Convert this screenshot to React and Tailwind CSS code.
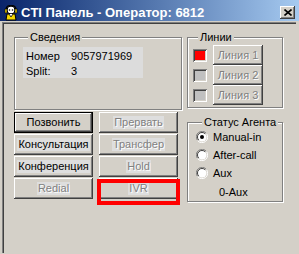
import React from 'react';

const raised = "shadow-[inset_-1px_-1px_#404040,inset_1px_1px_#ffffff,inset_-2px_-2px_#808080,inset_2px_2px_#d4d0c8]";
const sunken = "shadow-[inset_1px_1px_#808080,inset_-1px_-1px_#ffffff,inset_2px_2px_#404040,inset_-2px_-2px_#d4d0c8]";
const etched = "border border-[#808080] shadow-[inset_1px_1px_0_#ffffff,1px_1px_0_#ffffff]";
const disabledText = "text-[#808080] [text-shadow:1px_1px_0_#ffffff]";

const AgentIcon = () => (
    <svg width="16" height="16" viewBox="0 0 16 16">
        <circle cx="8" cy="5" r="4" fill="#ffffff" stroke="#000" strokeWidth="1" />
        <path d="M3 5 Q3 0 8 0.8 Q13 0 13 5" fill="none" stroke="#000" strokeWidth="1.2" />
        <rect x="2" y="4" width="2" height="4" fill="#f5d800" stroke="#000" strokeWidth="0.6" />
        <rect x="12" y="4" width="2" height="4" fill="#f5d800" stroke="#000" strokeWidth="0.6" />
        <path d="M4 9 L12 9 L13 15 L3 15 Z" fill="#f5d800" stroke="#000" strokeWidth="1" />
        <path d="M6 9 L8 12 L10 9" fill="#ffffff" stroke="#000" strokeWidth="0.8" />
        <circle cx="6.5" cy="5" r="0.8" fill="#000" />
        <circle cx="9.5" cy="5" r="0.8" fill="#000" />
    </svg>
);

const Radio = ({ checked }) => (
    <svg width="12" height="12" viewBox="0 0 12 12">
        <path d="M10.5 2.5 A5.5 5.5 0 0 0 1.5 9.5" fill="none" stroke="#808080" strokeWidth="1" />
        <path d="M1.5 9.5 A5.5 5.5 0 0 0 10.5 2.5" fill="none" stroke="#ffffff" strokeWidth="1" />
        <circle cx="6" cy="6" r="4.5" fill="#ffffff" />
        <path d="M9.2 2.8 A4.5 4.5 0 0 0 2.8 9.2" fill="none" stroke="#404040" strokeWidth="1" />
        {checked && <circle cx="6" cy="6" r="2" fill="#000" />}
    </svg>
);

const Btn = ({ label, disabled, isDefault, shade }) => (
    <div className={`h-[21px] flex items-center justify-center bg-[#d4d0c8] ${raised} ${isDefault ? "border border-black" : ""}`}>
        <span className={`leading-[13px] px-[1px] ${shade ? "bg-[#dedede]" : ""} ${disabled ? disabledText : "text-black"}`}>{label}</span>
    </div>
);

const LineRow = ({ n, active }) => (
    <div className="flex items-center h-[20px]">
        <div className={`w-[14px] h-[13px] p-[2px] ${sunken}`}>
            <div className={`w-full h-full ${active ? "bg-[#ff0000]" : "bg-[#c0c0c0]"}`} />
        </div>
        <div className={`ml-[6px] w-[50px] h-[20px] flex items-center justify-center ${raised}`}>
            <span className={`leading-[13px] ${disabledText}`}>Линия {n}</span>
        </div>
    </div>
);

const App = () => {
    return (
        <div className="w-[299px] h-[254px] bg-[#d4d0c8] overflow-hidden text-[11px] text-black font-['Liberation_Sans',Arial,sans-serif]">
            {/* caption */}
            <div className="h-[21px] pt-[4px] pl-[3px] pr-[4px] flex items-center bg-gradient-to-r from-[#0a246a] to-[#a6caf0]">
                <AgentIcon />
                <span className="ml-[2px] text-white font-bold text-[13px] leading-[16px]">CTI Панель - Оператор: 6812</span>
                <div className={`ml-auto w-[15px] h-[13px] flex items-center justify-center bg-[#d4d0c8] ${raised}`}>
                    <svg width="8" height="7" viewBox="0 0 8 7">
                        <path d="M0.5 0.5 L7.5 6.5 M7.5 0.5 L0.5 6.5" stroke="#000" strokeWidth="1.6" />
                    </svg>
                </div>
            </div>

            {/* window body */}
            <div className="mt-[1px] ml-[2px] w-[294px] h-[231px] border-l border-t border-[#808080] border-r-white border-b-white">
                <div className="h-full border-l border-t border-[#404040] border-r-[#d4d0c8] border-b-[#d4d0c8] flex pt-[7px] pl-[10px]">
                    {/* left column */}
                    <div className="w-[168px] flex flex-col">
                        <fieldset className={`h-[79px] ${etched} pl-[8px]`}>
                            <legend className="ml-[5px] px-[2px] leading-[12px] bg-[#d4d0c8]">Сведения</legend>
                            <div className="mt-[4px] w-[120px] h-[31px] bg-[#dcdcdc] pl-[3px] pt-[2px]">
                                <div className="flex h-[15px] items-center">
                                    <span className="w-[45px]">Номер</span>
                                    <span>9057971969</span>
                                </div>
                                <div className="flex h-[15px] items-center">
                                    <span className="w-[45px]">Split:</span>
                                    <span>3</span>
                                </div>
                            </div>
                        </fieldset>

                        <div className="mt-[2px] grid grid-cols-[79px_79px] gap-x-[6px] gap-y-[1px]">
                            <Btn label="Позвонить" isDefault />
                            <Btn label="Прервать" disabled shade />
                            <Btn label="Консультация" shade />
                            <Btn label="Трансфер" disabled shade />
                            <Btn label="Конференция" shade />
                            <Btn label="Hold" disabled shade />
                            <Btn label="Redial" disabled shade />
                            <div className="relative">
                                <Btn label="IVR" disabled shade />
                                <div className="absolute left-[-2px] top-[1px] w-[83px] h-[26px] border-4 border-[#ff0000]" />
                            </div>
                        </div>
                    </div>

                    {/* right column */}
                    <div className="ml-[5px] w-[96px] flex flex-col">
                        <fieldset className={`h-[77px] ${etched} pl-[5px]`}>
                            <legend className="ml-[5px] px-[2px] leading-[12px] bg-[#d4d0c8]">Линии</legend>
                            <div className="mt-[2px]">
                                <LineRow n={1} active />
                                <LineRow n={2} />
                                <LineRow n={3} />
                            </div>
                        </fieldset>

                        <fieldset className={`mt-[8px] h-[86px] ${etched} pl-[8px]`}>
                            <legend className="ml-[6px] px-[2px] leading-[12px] bg-[#d4d0c8]">Статус Агента</legend>
                            <div className="flex flex-col">
                                <div className="flex items-center h-[18px] gap-[5px]"><Radio checked /><span>Manual-in</span></div>
                                <div className="flex items-center h-[18px] gap-[5px]"><Radio /><span>After-call</span></div>
                                <div className="flex items-center h-[18px] gap-[5px]"><Radio /><span>Aux</span></div>
                                <div className="flex items-center h-[20px] pl-[23px]"><span>0-Aux</span></div>
                            </div>
                        </fieldset>
                    </div>
                </div>
            </div>
        </div>
    );
};

export default App;
